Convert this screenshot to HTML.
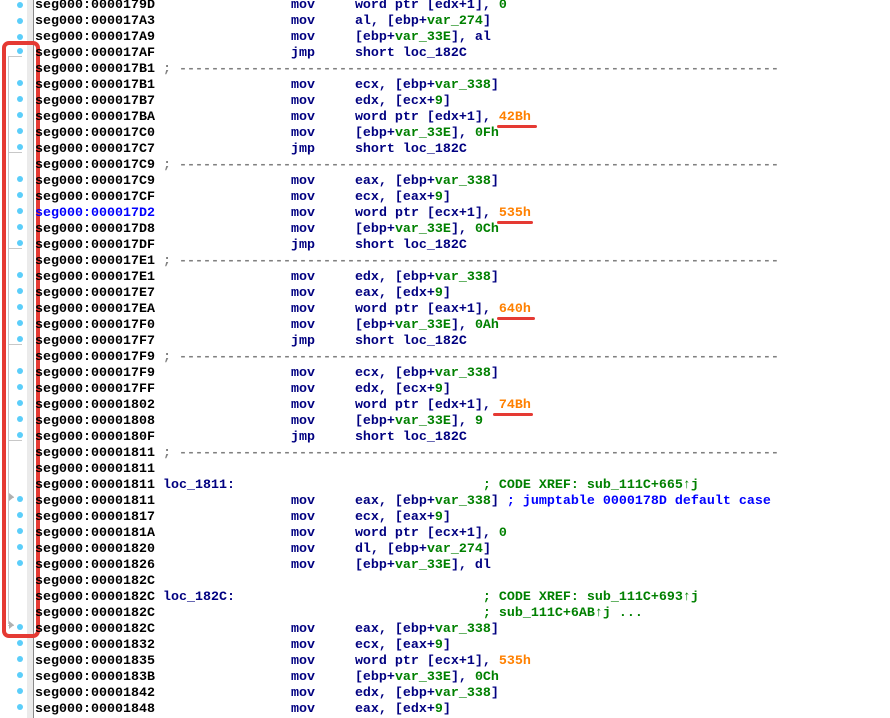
<!DOCTYPE html>
<html><head><meta charset="utf-8"><style>
body{margin:0;width:890px;height:718px;overflow:hidden;background:#fff;position:relative;font-family:"Liberation Mono",monospace;}
pre{position:absolute;left:35px;top:-2px;margin:0;font:bold 13.33px/16px "Liberation Mono",monospace;color:#000;}
.m{color:#000080}.g{color:#008000}.o{color:#ff8000}.b{color:#0000ff}.s{color:#808080}
.bar{position:absolute;left:27px;top:0;width:6px;height:718px;background:#ebebeb;border-right:1px solid #8a8a8a}
.d{position:absolute;left:17px;width:6px;height:6px;border-radius:50%;background:#5bcefa;margin-top:2px}
.red{position:absolute;left:2px;top:41px;width:30px;height:589px;border:4px solid #e53a33;border-radius:7px}
.u{position:absolute;height:3px;background:#e53a33;border-radius:2px}
.v{position:absolute;left:8px;top:56px;width:1px;height:568px;background:#c8c8c8}
.h{position:absolute;left:8px;width:14px;height:1px;background:#c8c8c8}
.ar{position:absolute;left:9px;width:0;height:0;border-left:5px solid #b0b0b0;border-top:4px solid transparent;border-bottom:4px solid transparent}
</style></head><body>
<div class="bar"></div>
<div class="v"></div>
<div class="h" style="top:56px"></div><div class="h" style="top:152px"></div><div class="h" style="top:248px"></div><div class="h" style="top:344px"></div><div class="h" style="top:440px"></div>
<div class="h" style="top:497px;width:6px"></div><div class="h" style="top:625px;width:6px"></div>
<div class="ar" style="top:493px"></div><div class="ar" style="top:621px"></div>
<div class="d" style="top:0px"></div><div class="d" style="top:16px"></div><div class="d" style="top:32px"></div><div class="d" style="top:46px"></div>
<div class="d" style="top:78px"></div><div class="d" style="top:94px"></div><div class="d" style="top:110px"></div><div class="d" style="top:126px"></div><div class="d" style="top:142px"></div>
<div class="d" style="top:174px"></div><div class="d" style="top:190px"></div><div class="d" style="top:206px"></div><div class="d" style="top:222px"></div><div class="d" style="top:238px"></div>
<div class="d" style="top:270px"></div><div class="d" style="top:286px"></div><div class="d" style="top:302px"></div><div class="d" style="top:318px"></div><div class="d" style="top:334px"></div>
<div class="d" style="top:366px"></div><div class="d" style="top:382px"></div><div class="d" style="top:398px"></div><div class="d" style="top:414px"></div><div class="d" style="top:430px"></div>
<div class="d" style="top:494px"></div><div class="d" style="top:510px"></div><div class="d" style="top:526px"></div><div class="d" style="top:542px"></div><div class="d" style="top:558px"></div>
<div class="d" style="top:622px"></div><div class="d" style="top:638px"></div><div class="d" style="top:654px"></div><div class="d" style="top:670px"></div><div class="d" style="top:686px"></div><div class="d" style="top:702px"></div>
<div class="red"></div>
<div class="u" style="left:497px;top:125px;width:40px"></div>
<div class="u" style="left:497px;top:221px;width:36px"></div>
<div class="u" style="left:497px;top:317px;width:38px"></div>
<div class="u" style="left:493px;top:413px;width:40px"></div>
<pre>seg000:0000179D                 <span class="m">mov     word ptr [edx+1], </span><span class="g">0</span>
seg000:000017A3                 <span class="m">mov     al, [ebp+</span><span class="g">var_274</span><span class="m">]</span>
seg000:000017A9                 <span class="m">mov     [ebp+</span><span class="g">var_33E</span><span class="m">], al</span>
seg000:000017AF                 <span class="m">jmp     short loc_182C</span>
seg000:000017B1 <span class="s">; ---------------------------------------------------------------------------</span>
seg000:000017B1                 <span class="m">mov     ecx, [ebp+</span><span class="g">var_338</span><span class="m">]</span>
seg000:000017B7                 <span class="m">mov     edx, [ecx+</span><span class="g">9</span><span class="m">]</span>
seg000:000017BA                 <span class="m">mov     word ptr [edx+1], </span><span class="o">42Bh</span>
seg000:000017C0                 <span class="m">mov     [ebp+</span><span class="g">var_33E</span><span class="m">], </span><span class="g">0Fh</span>
seg000:000017C7                 <span class="m">jmp     short loc_182C</span>
seg000:000017C9 <span class="s">; ---------------------------------------------------------------------------</span>
seg000:000017C9                 <span class="m">mov     eax, [ebp+</span><span class="g">var_338</span><span class="m">]</span>
seg000:000017CF                 <span class="m">mov     ecx, [eax+</span><span class="g">9</span><span class="m">]</span>
<span class="b">seg000:000017D2</span>                 <span class="m">mov     word ptr [ecx+1], </span><span class="o">535h</span>
seg000:000017D8                 <span class="m">mov     [ebp+</span><span class="g">var_33E</span><span class="m">], </span><span class="g">0Ch</span>
seg000:000017DF                 <span class="m">jmp     short loc_182C</span>
seg000:000017E1 <span class="s">; ---------------------------------------------------------------------------</span>
seg000:000017E1                 <span class="m">mov     edx, [ebp+</span><span class="g">var_338</span><span class="m">]</span>
seg000:000017E7                 <span class="m">mov     eax, [edx+</span><span class="g">9</span><span class="m">]</span>
seg000:000017EA                 <span class="m">mov     word ptr [eax+1], </span><span class="o">640h</span>
seg000:000017F0                 <span class="m">mov     [ebp+</span><span class="g">var_33E</span><span class="m">], </span><span class="g">0Ah</span>
seg000:000017F7                 <span class="m">jmp     short loc_182C</span>
seg000:000017F9 <span class="s">; ---------------------------------------------------------------------------</span>
seg000:000017F9                 <span class="m">mov     ecx, [ebp+</span><span class="g">var_338</span><span class="m">]</span>
seg000:000017FF                 <span class="m">mov     edx, [ecx+</span><span class="g">9</span><span class="m">]</span>
seg000:00001802                 <span class="m">mov     word ptr [edx+1], </span><span class="o">74Bh</span>
seg000:00001808                 <span class="m">mov     [ebp+</span><span class="g">var_33E</span><span class="m">], </span><span class="g">9</span>
seg000:0000180F                 <span class="m">jmp     short loc_182C</span>
seg000:00001811 <span class="s">; ---------------------------------------------------------------------------</span>
seg000:00001811
seg000:00001811 <span class="m">loc_1811:</span>                               <span class="g">; CODE XREF: sub_111C+665↑j</span>
seg000:00001811                 <span class="m">mov     eax, [ebp+</span><span class="g">var_338</span><span class="m">]</span> <span class="b">; jumptable 0000178D default case</span>
seg000:00001817                 <span class="m">mov     ecx, [eax+</span><span class="g">9</span><span class="m">]</span>
seg000:0000181A                 <span class="m">mov     word ptr [ecx+1], </span><span class="g">0</span>
seg000:00001820                 <span class="m">mov     dl, [ebp+</span><span class="g">var_274</span><span class="m">]</span>
seg000:00001826                 <span class="m">mov     [ebp+</span><span class="g">var_33E</span><span class="m">], dl</span>
seg000:0000182C
seg000:0000182C <span class="m">loc_182C:</span>                               <span class="g">; CODE XREF: sub_111C+693↑j</span>
seg000:0000182C                                         <span class="g">; sub_111C+6AB↑j ...</span>
seg000:0000182C                 <span class="m">mov     eax, [ebp+</span><span class="g">var_338</span><span class="m">]</span>
seg000:00001832                 <span class="m">mov     ecx, [eax+</span><span class="g">9</span><span class="m">]</span>
seg000:00001835                 <span class="m">mov     word ptr [ecx+1], </span><span class="o">535h</span>
seg000:0000183B                 <span class="m">mov     [ebp+</span><span class="g">var_33E</span><span class="m">], </span><span class="g">0Ch</span>
seg000:00001842                 <span class="m">mov     edx, [ebp+</span><span class="g">var_338</span><span class="m">]</span>
seg000:00001848                 <span class="m">mov     eax, [edx+</span><span class="g">9</span><span class="m">]</span></pre>
</body></html>
